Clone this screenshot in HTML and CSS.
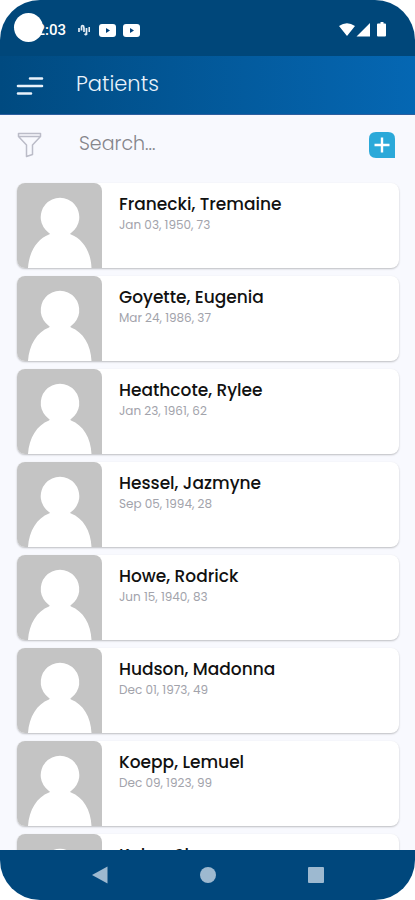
FILE: index.html
```html
<!DOCTYPE html>
<html lang="en">
<head>
<meta charset="utf-8">
<meta name="viewport" content="width=device-width, initial-scale=1">
<title>Patients</title>
<link rel="stylesheet" href="styles.css">
</head>
<body>
<svg class="defs" aria-hidden="true">
  <symbol id="person" viewBox="0 0 85 85">
    <path d="M11 85C12 69 20 56 32 51.500Q33.500 50.500 32 50A19.300 19.300 0 1 1 54 50Q52.500 50.500 54 51.500C66 56 74 69 74.500 85Z" fill="#fff"/>
  </symbol>
</svg>
<div class="phone">
  <div class="status">
    <span class="camera"></span>
    <span class="clock">12:03</span>
    <svg class="vibe" viewBox="0 0 12 14" aria-hidden="true"><path d="M1 5v4M3.500 7.500V4Q3.500 2 5.500 3L6 5V9M8.500 5V12M6.500 11L8.500 12M11.300 4v5" fill="none" stroke="#e4edf5" stroke-width="1.700"/></svg>
    <svg class="video" viewBox="0 0 17 13" aria-hidden="true"><rect width="17" height="13" rx="3" fill="#fff"/><path d="M7 4l4 2.500-4 2.500z" fill="#00407a"/></svg>
    <svg class="video" viewBox="0 0 17 13" aria-hidden="true"><rect width="17" height="13" rx="3" fill="#fff"/><path d="M7 4l4 2.500-4 2.500z" fill="#00407a"/></svg>
    <svg class="signals" viewBox="0 0 48 16" aria-hidden="true"><path d="M0 4Q8 -1.500 16 4L8 14ZM31 1V14.500H17.500ZM40 1.500h1.500V0h3v1.500H46q1 0 1 1V13.500q0 1-1 1H39q-1 0-1-1V2.500q0-1 1-1z" fill="#fff"/></svg>
  </div>
  <header class="bar">
    <button class="menu" aria-label="Menu"><svg viewBox="0 0 28 20" aria-hidden="true"><path d="M14 2.500H26M2 10H26M2 17.500H15" stroke="#e9f2fb" stroke-width="2.600" stroke-linecap="round"/></svg></button>
    <h1>Patients</h1>
  </header>
  <main>
    <div class="tools">
      <button class="filter" aria-label="Filter"><svg viewBox="0 0 26 26" aria-hidden="true"><path d="M1.500 1.500H23.500V4.500L15.500 13V22.500L9.500 24.500V13L1.500 4.500ZM2 4.500H23" fill="none" stroke="#bbbcc8" stroke-width="1.500" stroke-linejoin="round"/></svg></button>
      <input type="search" placeholder="Search..." aria-label="Search patients">
      <button class="add" aria-label="Add patient"><svg viewBox="0 0 26 26" aria-hidden="true"><path d="M7 0H19Q26 0 26 7V26H7Q0 26 0 19V7Q0 0 7 0Z" fill="#2ba9d9"/><path d="M13 5.500V20.500M5.500 13H20.500" stroke="#fff" stroke-width="2.400"/></svg></button>
    </div>
    <ul class="list">
      <li class="card"><svg class="avatar" aria-hidden="true"><use href="#person"/></svg><div class="info"><h2>Franecki, Tremaine</h2><p>Jan 03, 1950, 73</p></div></li>
      <li class="card"><svg class="avatar" aria-hidden="true"><use href="#person"/></svg><div class="info"><h2>Goyette, Eugenia</h2><p>Mar 24, 1986, 37</p></div></li>
      <li class="card"><svg class="avatar" aria-hidden="true"><use href="#person"/></svg><div class="info"><h2>Heathcote, Rylee</h2><p>Jan 23, 1961, 62</p></div></li>
      <li class="card"><svg class="avatar" aria-hidden="true"><use href="#person"/></svg><div class="info"><h2>Hessel, Jazmyne</h2><p>Sep 05, 1994, 28</p></div></li>
      <li class="card"><svg class="avatar" aria-hidden="true"><use href="#person"/></svg><div class="info"><h2>Howe, Rodrick</h2><p>Jun 15, 1940, 83</p></div></li>
      <li class="card"><svg class="avatar" aria-hidden="true"><use href="#person"/></svg><div class="info"><h2>Hudson, Madonna</h2><p>Dec 01, 1973, 49</p></div></li>
      <li class="card"><svg class="avatar" aria-hidden="true"><use href="#person"/></svg><div class="info"><h2>Koepp, Lemuel</h2><p>Dec 09, 1923, 99</p></div></li>
      <li class="card"><svg class="avatar" aria-hidden="true"><use href="#person"/></svg><div class="info"><h2>Kulas, Sh</h2></div></li>
    </ul>
  </main>
  <nav class="system" aria-label="System">
    <button aria-label="Back"><svg viewBox="0 0 18 18" aria-hidden="true"><path d="M16.500 .5V17.500L1 9Z"/></svg></button>
    <button aria-label="Home"><svg viewBox="0 0 18 18" aria-hidden="true"><circle cx="9" cy="9" r="8"/></svg></button>
    <button aria-label="Recent apps"><svg viewBox="0 0 18 18" aria-hidden="true"><rect x="1" y="1" width="16" height="16" rx="1"/></svg></button>
  </nav>
</div>
</body>
</html>
```
FILE: styles.css
```css
* { box-sizing: border-box; }
body {
  margin: 0;
  background: #fff;
  font-family: Poppins, Inter, sans-serif;
}
h1, h2, p, ul { margin: 0; padding: 0; }
button { padding: 0; border: 0; background: none; display: flex; }
.defs { display: none; }
.phone {
  height: 100vh;
  display: flex;
  flex-direction: column;
  overflow: hidden;
  border-radius: 40px;
  background: #f8f9fe;
}
.status {
  position: relative;
  height: 56px;
  flex: none;
  display: flex;
  align-items: center;
  padding: 4px 28px 0;
  background: #00477a;
  color: #fff;
}
.camera {
  position: absolute;
  left: 14px;
  top: 13px;
  width: 29px;
  height: 29px;
  border-radius: 50%;
  background: #fff;
}
.clock { font: 500 15px Roboto, sans-serif; margin-right: 12px; }
.vibe { width: 12px; height: 14px; margin-right: 9px; }
.video { width: 17px; height: 13px; margin-right: 7px; }
.signals { width: 48px; height: 16px; margin-left: auto; }
.bar {
  height: 59px;
  flex: none;
  display: flex;
  align-items: center;
  gap: 32px;
  padding: 2px 16px 0;
  background: linear-gradient(90deg, #004a80, #0567b3);
  border-bottom: 1px solid #2d5f9f;
  color: #e9f2fb;
}
.menu svg { width: 28px; height: 20px; }
h1 { font-family: Poppins, sans-serif; font-size: 21px; font-weight: 300; line-height: 32px; padding-bottom: 4px; }
main { flex: 1; min-height: 0; overflow: hidden; padding: 0 16px 0 17px; }
.tools { height: 60px; display: flex; align-items: center; padding-right: 4px; }
.filter svg, .add svg { width: 26px; height: 26px; }
input {
  flex: 1;
  min-width: 0;
  margin: 0 20px 2px 36px;
  padding: 0;
  border: 0;
  outline: 0;
  background: none;
  font: 300 19px/28px Poppins, sans-serif;
  color: #555;
}
input::placeholder { color: #85858b; opacity: 1; }
.list { list-style: none; display: flex; flex-direction: column; gap: 8px; padding-top: 8px; }
.card {
  height: 85px;
  flex: none;
  display: flex;
  gap: 17px;
  border-radius: 8px;
  background: #fff;
  box-shadow: 0 1px 2px #0000003d;
}
.avatar { width: 85px; height: 85px; flex: none; border-radius: 8px 8px 0 8px; background: #c4c4c4; }
.info { padding-top: 9px; }
h2 { font-size: 17px; font-weight: 500; line-height: 24px; color: #111; }
.info p { font-size: 12px; line-height: 18px; color: #a2a3ab; }
.system {
  height: 50px;
  flex: none;
  display: flex;
  justify-content: center;
  align-items: center;
  gap: 90px;
  background: #00477c;
}
.system svg { width: 18px; height: 18px; fill: #9db9d0; }
```
